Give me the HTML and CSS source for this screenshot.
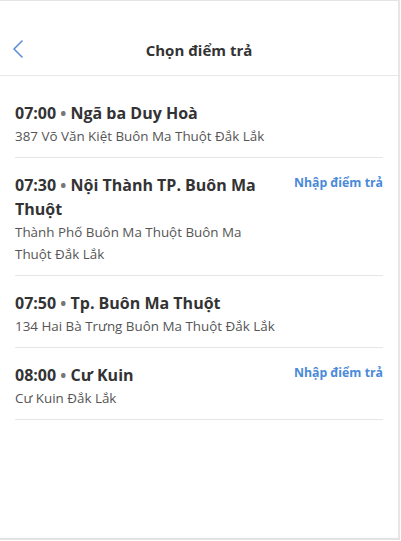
FILE: index.html
```html
<!DOCTYPE html>
<html lang="vi">
<head>
<meta charset="utf-8">
<link rel="stylesheet" href="styles.css">
</head>
<body>
<div class="frame">
  <header class="header">
    <button class="back" aria-label="Quay lại">
      <svg width="12" height="20" viewBox="0 0 12 20"><path d="M10 2 L2 10 L10 18" fill="none" stroke="#5b8dd6" stroke-width="1.6" stroke-linecap="round" stroke-linejoin="round"/></svg>
    </button>
    <h1 class="title">Chọn điểm trả</h1>
  </header>
  <ul class="list">
    <li class="item">
      <div class="info">
        <div class="name">07:00 <span class="dot">•</span> Ngã ba Duy Hoà</div>
        <div class="addr">387 Võ Văn Kiệt Buôn Ma Thuột Đắk Lắk</div>
      </div>
    </li>
    <li class="item">
      <div class="info narrow">
        <div class="name">07:30 <span class="dot">•</span> Nội Thành TP. Buôn Ma Thuột</div>
        <div class="addr">Thành Phố Buôn Ma Thuột Buôn Ma Thuột Đắk Lắk</div>
      </div>
      <a class="link" href="#">Nhập điểm trả</a>
    </li>
    <li class="item">
      <div class="info">
        <div class="name">07:50 <span class="dot">•</span> Tp. Buôn Ma Thuột</div>
        <div class="addr">134 Hai Bà Trưng Buôn Ma Thuột Đắk Lắk</div>
      </div>
    </li>
    <li class="item">
      <div class="info narrow">
        <div class="name">08:00 <span class="dot">•</span> Cư Kuin</div>
        <div class="addr">Cư Kuin Đắk Lắk</div>
      </div>
      <a class="link" href="#">Nhập điểm trả</a>
    </li>
  </ul>
</div>
</body>
</html>
```
FILE: styles.css
```css
* { box-sizing: border-box; }
html, body { margin: 0; padding: 0; background: #fff; }
body {
  font-family: "Open Sans", "Noto Sans", "DejaVu Sans", sans-serif;
  color: #333;
}
.frame {
  width: 400px;
  height: 540px;
  border-top: 1px solid #e4e4e4;
  border-right: 2px solid #e6e6e6;
  border-bottom: 2px solid #e2e2e2;
  background: #fff;
}
.header {
  margin-top: 24px;
  height: 51px;
  border-bottom: 1px solid #e8e8e8;
  display: flex;
  align-items: center;
  justify-content: center;
  position: relative;
}
.back {
  position: absolute;
  left: 12px;
  top: 13px;
  background: none;
  border: 0;
  padding: 0;
  width: 14px;
  height: 22px;
  display: flex;
  align-items: center;
}
.title {
  margin: 0;
  font-size: 15px;
  font-weight: 700;
  color: #333;
}
.list {
  list-style: none;
  margin: 0;
  padding: 10px 0 0;
  margin-left: 15px;
  width: 368px;
}
.item {
  display: flex;
  align-items: flex-start;
  padding: 15px 0 10px;
  border-bottom: 1px solid #e6e6e6;
}
.info { flex: 1; min-width: 0; }
.info.narrow { flex: 0 0 262px; }
.name {
  font-size: 16px;
  font-weight: 700;
  line-height: 24px;
  color: #333;
}
.dot {
  color: #777;
  line-height: 1;
}
.addr {
  font-size: 13.4px;
  line-height: 22px;
  color: #555;
}
.link {
  margin-left: auto;
  font-size: 12.3px;
  font-weight: 700;
  color: #4a8ad8;
  text-decoration: none;
  line-height: 20px;
  white-space: nowrap;
}
```
